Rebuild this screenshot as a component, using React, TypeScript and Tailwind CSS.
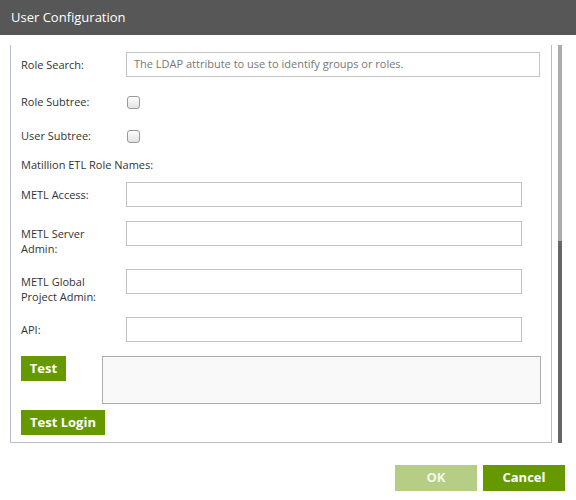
import React from 'react';

const font = { fontFamily: '"Open Sans", "Noto Sans", sans-serif' };

const Checkbox = () => (
  <div className="w-[13px] h-[13px] rounded-[3px] border border-[#9a9a9a] bg-gradient-to-b from-[#fdfdfd] to-[#e2e2e2]" />
);

const TextInput = ({ wide, placeholder }: { wide?: boolean; placeholder?: string }) => (
  <div
    className={`h-[25px] border border-[#c4c4c4] bg-white flex items-center px-[7px] text-[11px] text-[#777] ${
      wide ? 'w-[414px]' : 'w-[396px]'
    }`}
  >
    {placeholder}
  </div>
);

const Row = ({ label, children, className }: { label: React.ReactNode; children: React.ReactNode; className?: string }) => (
  <div className={`flex items-start ${className ?? ''}`}>
    <div className="w-[105px] pt-[5px] pb-[1px] text-[11px] leading-[15px] text-[#333]">{label}</div>
    {children}
  </div>
);

const CheckRow = ({ label, className }: { label: string; className?: string }) => (
  <div className={`flex items-center h-[20px] ${className ?? ''}`}>
    <div className="w-[106px] text-[11px] text-[#333]">{label}</div>
    <Checkbox />
  </div>
);

export default function App() {
  return (
    <div className="w-[576px] h-[500px] bg-white flex flex-col" style={font}>
      <div className="h-[35px] bg-[#575757] flex items-center px-[11px] text-white text-[13px]">
        User Configuration
      </div>

      <div className="flex px-[10px] pt-[10px] h-[408px]">
        <div className="flex-1 h-[398px] border-l border-r border-b border-[#b8bccb] pl-[10px] pr-[10px] flex flex-col">
          <Row label="Role Search:" className="mt-[7px]">
            <TextInput wide placeholder="The LDAP attribute to use to identify groups or roles." />
          </Row>
          <CheckRow label="Role Subtree:" className="mt-[15px]" />
          <CheckRow label="User Subtree:" className="mt-[14px]" />
          <div className="mt-[10px] h-[17px] text-[11px] leading-[17px] text-[#333]">Matillion ETL Role Names:</div>
          <Row label="METL Access:" className="mt-[9px]">
            <TextInput />
          </Row>
          <Row label={<>METL Server<br />Admin:</>} className="mt-[14px]">
            <TextInput />
          </Row>
          <Row label={<>METL Global<br />Project Admin:</>} className="mt-[12px]">
            <TextInput />
          </Row>
          <Row label="API:" className="mt-[12px]">
            <TextInput />
          </Row>
          <div className="mt-[14px] flex items-start">
            <button className="h-[25px] w-[45px] bg-[#669900] text-white font-bold text-[13px]">Test</button>
            <div className="ml-[36px] w-[439px] h-[48px] border border-[#adadad] bg-[#f9f9f9]" />
          </div>
          <div className="mt-[5px]">
            <button className="h-[25px] w-[84px] bg-[#669900] text-white font-bold text-[13px]">Test Login</button>
          </div>
        </div>
        <div className="ml-[6px] w-[8px] h-[398px] bg-[#adadad] flex flex-col justify-end">
          <div className="h-[202px] bg-[#666]" />
        </div>
        <div className="w-[10px]" />
      </div>

      <div className="flex justify-end gap-[6px] pr-[11px] mt-[22px]">
        <button className="w-[82px] h-[26px] bg-[#b5cd85] text-[#f3f7ea] font-bold text-[13px]">OK</button>
        <button className="w-[82px] h-[26px] bg-[#669900] text-white font-bold text-[13px]">Cancel</button>
      </div>
    </div>
  );
}
